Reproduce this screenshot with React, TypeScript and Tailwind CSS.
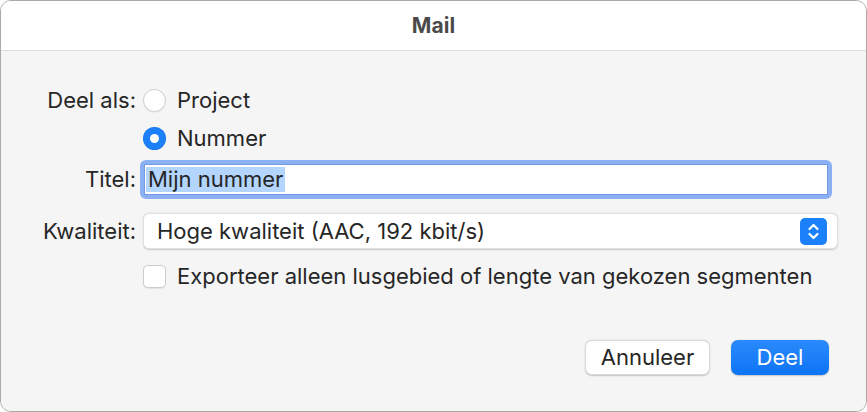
import React from "react";

const font = { fontFamily: "Inter, 'Noto Sans', sans-serif" };

const Radio = ({ checked }: { checked?: boolean }) =>
  checked ? (
    <span className="flex h-[23px] w-[23px] items-center justify-center rounded-full bg-[#1b80f9] shadow-[inset_0_0_0_0.5px_rgba(0,0,0,0.12)]">
      <span className="h-[9px] w-[9px] rounded-full bg-white" />
    </span>
  ) : (
    <span className="h-[23px] w-[23px] rounded-full border border-[#cfcfcf] bg-white shadow-[0_0.5px_1px_rgba(0,0,0,0.08)]" />
  );

export default function App() {
  return (
    <div className="h-[412px] w-[867px] bg-white text-[#262626]" style={font}>
      <div className="flex h-full flex-col overflow-hidden rounded-[11px] border border-[#a9a9a9]">
        {/* title bar */}
        <div className="flex h-[50px] shrink-0 items-center justify-center border-b border-[#dedede] bg-white">
          <span className="text-[21px] font-bold tracking-[0.1px] text-[#4a4a4a]">Mail</span>
        </div>

        {/* body */}
        <div className="flex flex-1 flex-col bg-[#f5f5f5] pt-[30px] text-[22px]">
          <div className="grid grid-cols-[135px_1fr] items-center gap-x-[7px]">
            <div className="text-right leading-[38px]">Deel als:</div>
            <label className="flex h-[38px] items-center gap-[11px]">
              <Radio />
              <span>Project</span>
            </label>

            <div />
            <label className="flex h-[38px] items-center gap-[11px]">
              <Radio checked />
              <span>Nummer</span>
            </label>

            <div className="mt-[3px] text-right">Titel:</div>
            <div className="mt-[3px] ml-[-3px] mr-[34px] rounded-[6px] border-[4px] border-[#8cb0f4]">
              <div className="flex h-[31px] items-center border border-[#7499e6] bg-white px-[1px]">
                <span className="bg-[#b4d5fe] px-[2px] leading-[25px]">Mijn nummer</span>
              </div>
            </div>

            <div className="mt-[14px] text-right">Kwaliteit:</div>
            <div className="mt-[14px] mr-[28px] flex h-[36px] items-center justify-between rounded-[6px] border border-[#e0e0e0] bg-white pl-[13px] pr-[10px] shadow-[0_0.5px_1.5px_rgba(0,0,0,0.18)]">
              <span>Hoge kwaliteit (AAC, 192 kbit/s)</span>
              <span className="flex h-[27px] w-[27px] items-center justify-center rounded-[5px] bg-[#1b80f9]">
                <svg width="13" height="19" viewBox="0 0 13 19" fill="none" stroke="white" strokeWidth="2.2" strokeLinecap="round" strokeLinejoin="round">
                  <path d="M2.5 7 L6.5 3 L10.5 7" />
                  <path d="M2.5 12 L6.5 16 L10.5 12" />
                </svg>
              </span>
            </div>

            <div />
            <label className="mt-[13px] flex h-[28px] items-center gap-[11px]">
              <span className="h-[23px] w-[23px] rounded-[5px] border border-[#cdcdcd] bg-white shadow-[0_0.5px_1px_rgba(0,0,0,0.08)]" />
              <span>Exporteer alleen lusgebied of lengte van gekozen segmenten</span>
            </label>
          </div>

          <div className="mt-[50px] flex justify-end gap-[21px] pr-[37px]">
            <button className="h-[35px] w-[125px] rounded-[7px] border border-[#dadada] bg-white text-[22px] text-[#262626] shadow-[0_0.5px_1.5px_rgba(0,0,0,0.2)]">
              Annuleer
            </button>
            <button className="h-[35px] w-[98px] rounded-[7px] bg-gradient-to-b from-[#2a8afc] to-[#0b74f5] text-[22px] text-white shadow-[0_0.5px_1.5px_rgba(0,0,0,0.2)]">
              Deel
            </button>
          </div>
        </div>
      </div>
    </div>
  );
}
